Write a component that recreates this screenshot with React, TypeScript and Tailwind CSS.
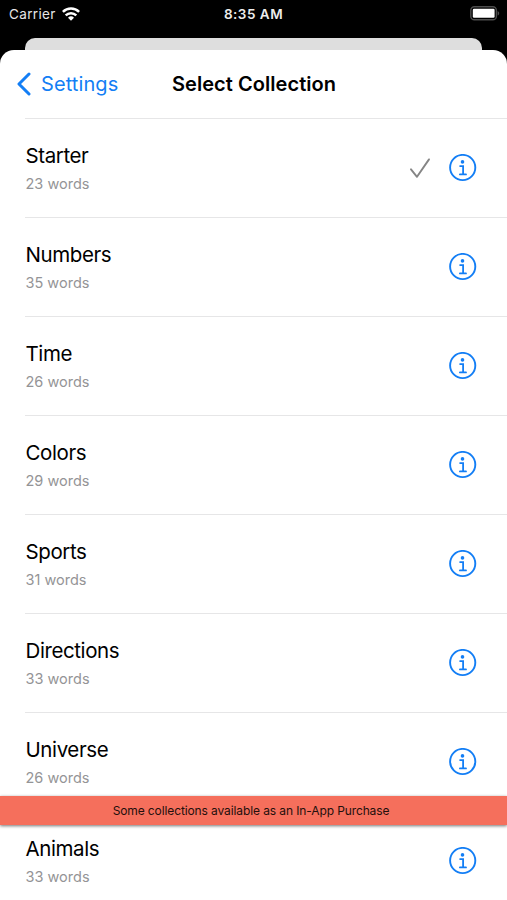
interface Collection {
  name: string
  words: number
}

const collections: Collection[] = [
  { name: 'Starter', words: 23 },
  { name: 'Numbers', words: 35 },
  { name: 'Time', words: 26 },
  { name: 'Colors', words: 29 },
  { name: 'Sports', words: 31 },
  { name: 'Directions', words: 33 },
  { name: 'Universe', words: 26 },
  { name: 'Animals', words: 33 },
]

function WifiIcon() {
  return (
    <svg className="-mt-px" width="18" height="14" viewBox="0 0 18 14" fill="none" stroke="white" strokeWidth="2.5">
      <path d="M.9 4.9a11.6 11.6 0 0 1 16.2 0" />
      <path d="M3.7 8.3a7.6 7.6 0 0 1 10.6 0" />
      <path d="M9 13.8 6 10.8a4.3 4.3 0 0 1 6 0Z" fill="white" stroke="none" />
    </svg>
  )
}

function BatteryIcon() {
  return (
    <svg width="30" height="15" viewBox="0 0 30 15" fill="none">
      <rect x="0.8" y="0.8" width="25.6" height="13" rx="3.6" stroke="#4d4d4d" strokeWidth="1.4" />
      <rect x="2.8" y="2.8" width="21.8" height="9" rx="1.2" fill="white" />
      <path d="M27.6 5v4.6c1-.4 1.6-1.3 1.6-2.3s-.6-1.9-1.6-2.3Z" fill="#4d4d4d" />
    </svg>
  )
}

function InfoIcon() {
  return (
    <svg width="28" height="28" viewBox="0 0 28 28" fill="none" stroke="#137ef5" strokeWidth="1.9">
      <circle cx="13.7" cy="13.5" r="12.6" />
      <circle cx="13.5" cy="7.9" r="1.8" fill="#137ef5" stroke="none" />
      <path d="M11.1 12.1h3v7.8M10.9 20.4h6.1" strokeWidth="1.8" strokeLinecap="round" />
    </svg>
  )
}

function CollectionRow({ item, selected }: { item: Collection; selected: boolean }) {
  return (
    <li className="ml-[25px] flex h-[98.95px] shrink-0 items-center border-t border-[#e6e6e7] pr-[30px]">
      <div className="flex-1 pt-[2px] pl-[0.5px]">
        <div className="text-[20.5px] leading-[26px] tracking-[-0.4px]">{item.name}</div>
        <div className="mt-[5px] text-[14.5px] leading-[20px] text-[#949496]">{item.words} words</div>
      </div>
      {selected && (
        <svg className="mr-[18px]" width="22" height="22" viewBox="0 0 22 22" fill="none" stroke="#858585" strokeWidth="1.9">
          <path d="m2 12.3 6 7.5L20 2.4" strokeLinecap="round" strokeLinejoin="round" />
        </svg>
      )}
      <InfoIcon />
    </li>
  )
}

export default function App() {
  return (
    <div className="relative flex h-[900px] w-[507px] flex-col overflow-hidden bg-black font-['Inter','Liberation_Sans',sans-serif] text-black">
      {/* Status bar */}
      <header className="grid h-[38px] shrink-0 grid-cols-3 items-start px-[9px] pt-[5px] text-[13.5px] leading-[18px] text-white">
        <div className="flex items-center gap-[6px] tracking-[0.35px] text-[#e6e6e6]">
          <span>Carrier</span>
          <WifiIcon />
        </div>
        <span className="text-center font-semibold tracking-[0.5px] text-[#ededed]">8:35 AM</span>
        <div className="-mr-[2px] flex justify-end pt-px">
          <BatteryIcon />
        </div>
      </header>

      {/* Edge of the sheet underneath */}
      <div className="mx-[25px] h-[12px] shrink-0 rounded-t-[10px] bg-[#dedede]" />

      <main className="flex flex-1 flex-col overflow-hidden rounded-t-[14px] bg-white">
        <nav className="grid h-[68px] shrink-0 grid-cols-[172px_1fr] items-center pl-[17px]">
          <button className="flex items-center gap-[10px] text-[20px] tracking-[0.1px] text-[#137ef5]">
            <svg width="14" height="24" viewBox="0 0 14 24" fill="none" stroke="currentColor" strokeWidth="3">
              <path d="M12 2 2 12 12 22" strokeLinecap="round" strokeLinejoin="round" />
            </svg>
            Settings
          </button>
          <h1 className="-ml-[17px] text-[20px] font-semibold tracking-[0.05px]">Select Collection</h1>
        </nav>
        <ul className="flex flex-col">
          {collections.map((item, index) => (
            <CollectionRow key={item.name} item={item} selected={index === 0} />
          ))}
        </ul>
      </main>

      {/* Purchase banner floats above the list */}
      <div className="absolute inset-x-0 top-[796px] flex h-[29px] items-center justify-center bg-[#f56f5c] pr-[5px] text-[12px] tracking-[-0.11px] text-[#24100d] shadow-[0_1px_3px_rgba(0,0,0,0.55)]">
        Some collections available as an In-App Purchase
      </div>
    </div>
  )
}
